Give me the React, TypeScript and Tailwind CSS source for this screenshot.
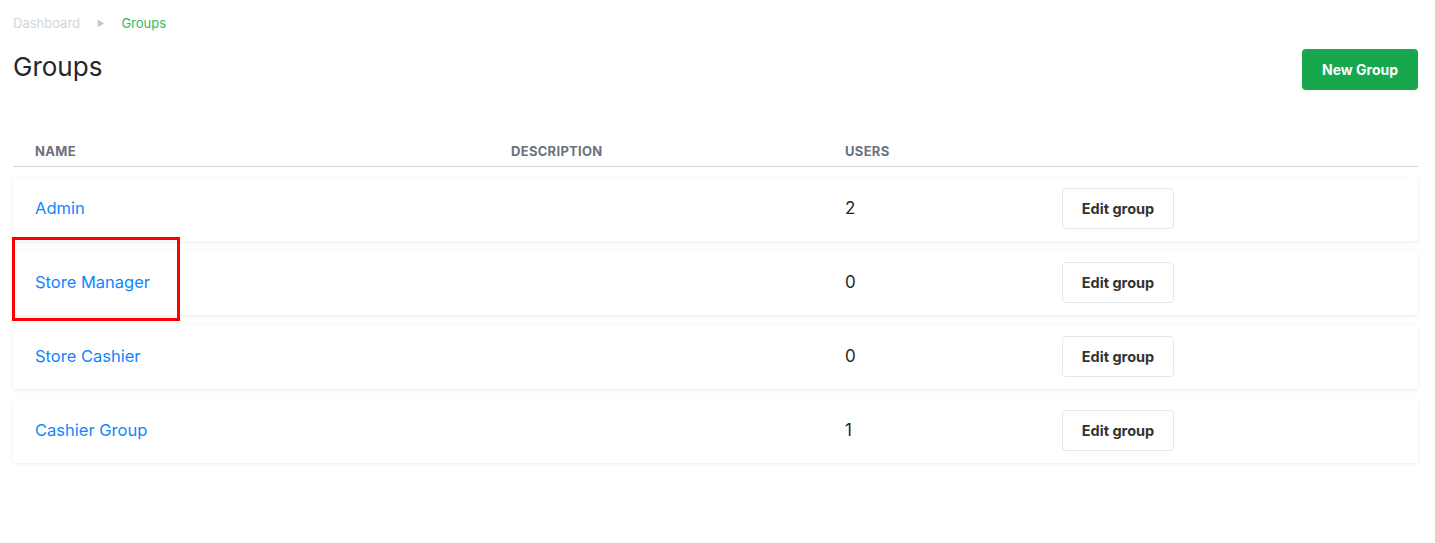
import React from 'react'

const GROUPS = [
  { name: 'Admin', description: '', users: 2 },
  { name: 'Store Manager', description: '', users: 0 },
  { name: 'Store Cashier', description: '', users: 0 },
  { name: 'Cashier Group', description: '', users: 1 },
]

export default function App() {
  return (
    <div className="relative min-h-[543px] bg-white px-[13px] pt-[14px] font-['Inter',sans-serif] text-[#1f2328]">
      {/* Breadcrumb */}
      <nav className="flex items-center text-[13px] leading-[18px]">
        <span className="text-[#d1d5db]">Dashboard</span>
        <span className="mx-[17px] text-[8px] text-[#c4c8cd]">▶</span>
        <span className="text-[#34b864]">Groups</span>
      </nav>

      {/* Header */}
      <div className="flex items-start justify-between">
        <h1 className="mt-[18px] text-[26px] leading-[34px] font-normal text-[#23272b]">Groups</h1>
        <button className="mt-[17px] mr-[4px] h-[41px] w-[116px] rounded-[4px] bg-[#17a74d] text-[14px] font-bold text-white">
          New Group
        </button>
      </div>

      {/* Table */}
      <div className="mt-[52px] mr-[4px]">
        <div className="grid grid-cols-[498px_334px_217px_1fr] border-b border-[#d4d6d9] pb-[4px] text-[13px] font-bold tracking-[0.3px] text-[#6b7280]">
          <div className="pl-[22px]">NAME</div>
          <div>DESCRIPTION</div>
          <div>USERS</div>
          <div />
        </div>

        <div className="mt-[10px] flex flex-col gap-[10px]">
          {GROUPS.map((g) => (
            <div
              key={g.name}
              className="grid h-[64px] grid-cols-[498px_334px_217px_1fr] items-center rounded-[3px] bg-white shadow-[0_1px_4px_rgba(0,0,0,0.08)]"
            >
              <div className="pl-[22px]">
                <a className="text-[16.5px] text-[#0f86ff]">{g.name}</a>
              </div>
              <div className="text-[16px]">{g.description}</div>
              <div className="text-[17px] text-[#23272b]">{g.users}</div>
              <div>
                <button className="h-[41px] w-[112px] rounded-[4px] border border-[#e5e7eb] bg-white text-[14.5px] font-bold text-[#333]">
                  Edit group
                </button>
              </div>
            </div>
          ))}
        </div>
      </div>

      {/* Annotation highlight */}
      <div className="pointer-events-none absolute left-[12px] top-[237px] h-[84px] w-[168px] border-[3px] border-[#ff0000]" />
    </div>
  )
}
